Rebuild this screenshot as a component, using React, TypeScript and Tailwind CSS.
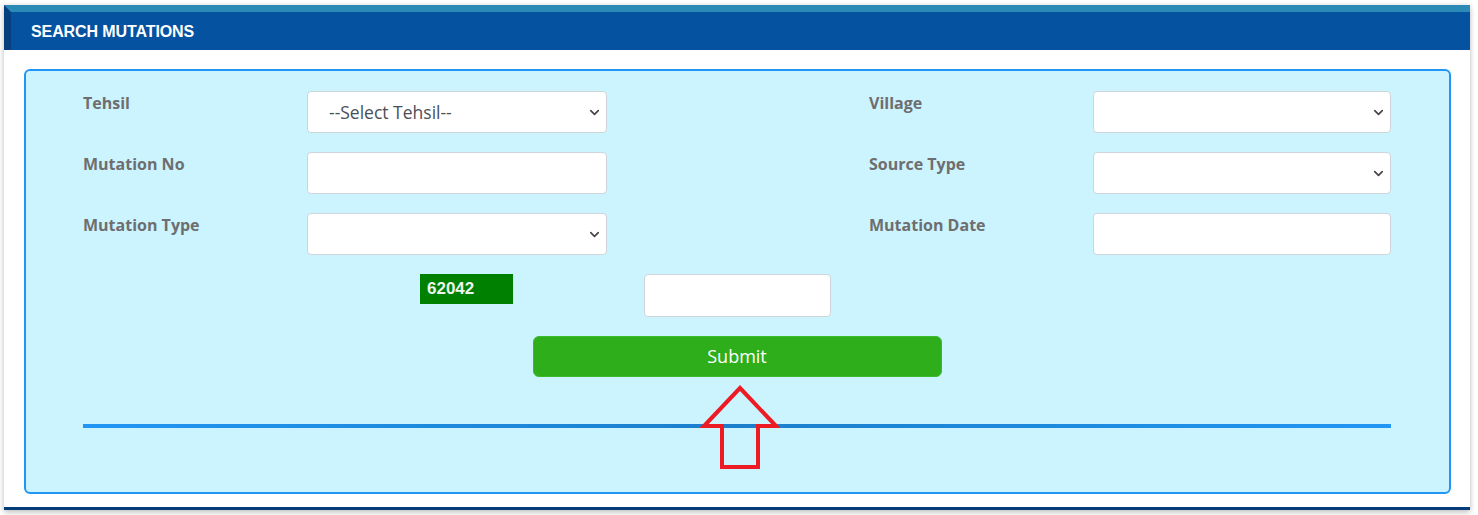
import React from "react";
import { ChevronDown } from "lucide-react";

const labelClass =
  "w-[224px] shrink-0 leading-[24px] text-[16px] font-bold text-[#6e6e6e] [font-family:'Open_Sans',sans-serif]";
const boxClass =
  "h-[42px] rounded-[4px] border border-[#ced4da] bg-white text-[17.5px] text-[#495057] [font-family:'Open_Sans',sans-serif]";

function SelectBox({ width, text }: { width: string; text?: string }) {
  return (
    <div className={`relative ${width} shrink-0`}>
      <div className={`${boxClass} w-full flex items-center pl-[21px]`}>{text}</div>
      <ChevronDown
        size={15}
        strokeWidth={2.6}
        className="absolute right-[5px] top-[14px] text-[#444]"
      />
    </div>
  );
}

function InputBox({ width }: { width: string }) {
  return <div className={`${boxClass} ${width} shrink-0`} />;
}

function FormRow({
  left,
  leftField,
  right,
  rightField,
}: {
  left: string;
  leftField: React.ReactNode;
  right: string;
  rightField: React.ReactNode;
}) {
  return (
    <div className="flex items-start h-[42px]">
      <div className={labelClass}>{left}</div>
      {leftField}
      <div className="flex-1" />
      <div className={labelClass}>{right}</div>
      {rightField}
    </div>
  );
}

export default function App() {
  return (
    <div className="w-[1478px] h-[515px] bg-white overflow-hidden pt-[5px] pl-[4px]">
      <div className="w-[1466px] bg-white border-b-[3px] border-[#053c7a] shadow-[0_3px_6px_rgba(0,0,0,0.18),0_0_5px_rgba(0,0,0,0.12)]">
        {/* header */}
        <div className="relative h-[45px]">
          <div className="h-[7px] bg-[#2b8ab6]" />
          <div className="h-[38px] bg-[#0452a0] flex items-center pl-[27px] pt-[1px]">
            <span className="text-white text-[16px] font-bold tracking-[-0.1px] [font-family:'Liberation_Sans',Arial,sans-serif]">
              SEARCH MUTATIONS
            </span>
          </div>
          <div className="absolute left-0 top-0 w-[7px] h-full bg-[#063f7d] [clip-path:polygon(0_0,100%_7px,100%_100%,0_100%)]" />
        </div>

        {/* body */}
        <div className="pt-[19px] pb-[13px] pl-[20px] pr-[19px]">
          <div className="relative rounded-[6px] border-2 border-[#2196f3] bg-[#ccf4ff] pt-[20px] pl-[57px] pr-[58px] pb-[64px]">
            <div className="flex flex-col gap-[19px]">
              <FormRow
                left="Tehsil"
                leftField={<SelectBox width="w-[300px]" text="--Select Tehsil--" />}
                right="Village"
                rightField={<SelectBox width="w-[298px]" />}
              />
              <FormRow
                left="Mutation No"
                leftField={<InputBox width="w-[300px]" />}
                right="Source Type"
                rightField={<SelectBox width="w-[298px]" />}
              />
              <FormRow
                left="Mutation Type"
                leftField={<SelectBox width="w-[300px]" />}
                right="Mutation Date"
                rightField={<InputBox width="w-[298px]" />}
              />

              {/* captcha */}
              <div className="flex items-start pl-[337px]">
                <div className="w-[93px] h-[30px] bg-[#008000] pl-[7px] pt-[5px] text-[17px] font-bold text-[#eef5ee] leading-[20px] [font-family:'Liberation_Sans',Arial,sans-serif]">
                  62042
                </div>
                <div className="ml-[131px] w-[187px] h-[43px] rounded-[4px] border border-[#ced4da] bg-white" />
              </div>

              <div className="flex justify-center">
                <button className="w-[409px] h-[41px] rounded-[6px] bg-[#2eae1b] border border-[#3cbb2a] text-white text-[18px] leading-[26px] pb-[2px] [font-family:'Open_Sans',sans-serif]">
                  Submit
                </button>
              </div>
            </div>

            <div className="mt-[47px] h-[4px] bg-gradient-to-r from-[#2196f3] via-[#1b7fcc] to-[#2196f3]" />

            {/* annotation arrow */}
            <svg
              className="absolute left-[674px] top-[312px]"
              width="80"
              height="90"
              viewBox="0 0 80 90"
            >
              <path
                d="M40 5 L76 43 L58 43 L58 84 L22 84 L22 43 L4 43 Z"
                fill="none"
                stroke="#ed1c24"
                strokeWidth="4"
                strokeLinejoin="miter"
              />
            </svg>
          </div>
        </div>
      </div>
    </div>
  );
}
